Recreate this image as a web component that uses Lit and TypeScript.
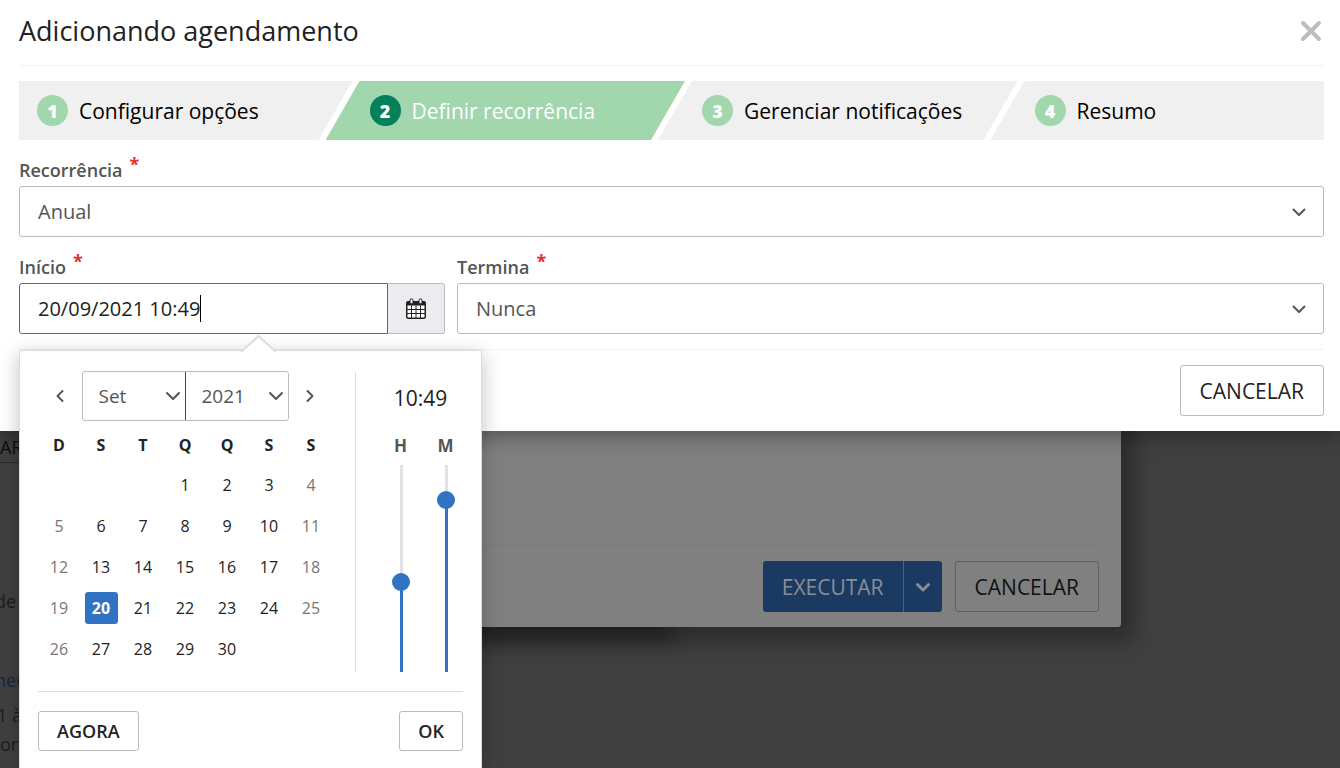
import { LitElement, html, css, svg, nothing } from "lit";
import { customElement, state } from "lit/decorators.js";
import { classMap } from "lit/directives/class-map.js";
import { styleMap } from "lit/directives/style-map.js";

const STEPS = ["Configurar opções", "Definir recorrência", "Gerenciar notificações", "Resumo"];
const MONTHS = ["Jan", "Fev", "Mar", "Abr", "Mai", "Jun", "Jul", "Ago", "Set", "Out", "Nov", "Dez"];
const WEEKDAYS = ["D", "S", "T", "Q", "Q", "S", "S"];

const chevron = (path: string, cls: string) => html`
  <svg class=${cls} width="16" height="16" viewBox="0 0 16 16" fill="none" stroke="currentColor"
    stroke-width="2" stroke-linecap="round" stroke-linejoin="round" aria-hidden="true">
    ${svg`<path d=${path} />`}
  </svg>`;

const DOWN = "M2 5l6 6 6-6";
const SMALL_DOWN = "M2.500 5.500 8 11l5.500-5.500";
const LEFT = "M10.500 3 5.500 8l5 5";
const RIGHT = "M5.500 3l5 5-5 5";

const base = css`
  * {
    box-sizing: border-box;
  }
  button,
  input,
  select {
    margin: 0;
    font: inherit;
    color: inherit;
  }
  button {
    padding: 0;
    border: 0;
    background: none;
    cursor: pointer;
  }
  .btn {
    height: 51px;
    padding: 0 19px;
    border: 1px solid #bcbcbc;
    border-radius: 3px;
    background: #fff;
    color: #222;
    font-size: 21px;
  }
`;

/* Page and earlier dialog, dimmed behind the active dialog. */
@customElement("dimmed-page")
export class DimmedPage extends LitElement {
  static styles = [
    base,
    css`
      :host {
        position: absolute;
        inset: 0;
        overflow: hidden;
        color: #1c1c1c;
        font-size: 18px;
        line-height: 24px;
      }
      .snip {
        position: absolute;
        white-space: nowrap;
        margin: 0;
      }
      .action {
        top: 431px;
        left: 0;
        width: 80px;
        height: 32px;
        border-bottom: 1px solid #2a2a2a;
        color: #0e0e0e;
        line-height: 32px;
      }
      .line1 {
        top: 589px;
        left: -5px;
      }
      .line2 {
        top: 668px;
        left: -5px;
        color: #12273f;
      }
      .line3 {
        top: 703px;
        left: -3px;
      }
      .line4 {
        top: 732px;
        left: 0;
      }
      .panel {
        position: absolute;
        top: 0;
        bottom: 141px;
        left: 219px;
        border-radius: 3px;
        box-shadow: 10px 12px 20px 4px rgba(0, 0, 0, 0.3);
      }
      .under {
        right: 680px;
      }
      .dialog {
        right: 219px;
        display: flex;
        flex-direction: column;
        justify-content: flex-end;
        padding: 0 22px 15px;
        background: #808080;
      }
      .footer {
        display: flex;
        justify-content: flex-end;
        gap: 13px;
        padding-top: 15px;
        border-top: 1px solid #7a7a7a;
      }
      .split {
        display: flex;
      }
      .btn {
        border-color: #606060;
        background: none;
        color: #111;
      }
      .split .btn {
        border: 0;
        background: #1a3a62;
        color: #8a8d92;
      }
      .split .run {
        border-radius: 3px 0 0 3px;
      }
      .split .more {
        display: grid;
        place-items: center;
        width: 39px;
        padding: 0;
        border-left: 1px solid #4a617f;
        border-radius: 0 3px 3px 0;
      }
      .more svg {
        stroke-width: 3;
      }
    `,
  ];

  render() {
    return html`
      <p class="snip action">AR</p>
      <p class="snip line1">de a</p>
      <p class="snip line2">nec</p>
      <p class="snip line3">1 à</p>
      <p class="snip line4">or</p>
      <div class="panel under"></div>
      <div class="panel dialog">
        <div class="footer">
          <div class="split">
            <button class="btn run" type="button">EXECUTAR</button>
            <button class="btn more" type="button" aria-label="Mais">${chevron(SMALL_DOWN, "")}</button>
          </div>
          <button class="btn" type="button">CANCELAR</button>
        </div>
      </div>
    `;
  }
}

@customElement("date-picker")
export class DatePicker extends LitElement {
  @state() private day = 20;
  @state() private month = 8;
  @state() private year = 2021;
  @state() private hour = 10;
  @state() private minute = 49;

  static styles = [
    base,
    css`
      :host {
        display: block;
        padding: 20px 18px 18px;
        border: 1px solid #dcdde1;
        border-radius: 3px;
        background: #fff;
        box-shadow: 0 5px 20px rgba(0, 0, 0, 0.25);
        color: #222;
      }
      .arrow {
        position: absolute;
        top: -16px;
        left: 221px;
        display: block;
      }
      .body {
        display: flex;
        align-items: stretch;
      }
      .calendar {
        width: 294px;
        margin-right: 23px;
      }
      .nav {
        display: flex;
        align-items: center;
        justify-content: space-between;
        padding: 0 14px;
        color: #555;
      }
      .nav button {
        display: grid;
        place-items: center;
        width: 16px;
        height: 32px;
      }
      .selects {
        display: flex;
        height: 50px;
        border: 1px solid #bcbcbc;
        border-radius: 3px;
      }
      .pick {
        position: relative;
        display: flex;
      }
      .pick + .pick {
        border-left: 1px solid #444;
      }
      .pick select {
        width: 102px;
        padding: 0 20px 0 16px;
        border: 0;
        background: none;
        appearance: none;
        font-size: 19px;
      }
      .pick svg {
        position: absolute;
        top: 16px;
        right: 4px;
        pointer-events: none;
      }
      table {
        width: 100%;
        border-collapse: collapse;
        table-layout: fixed;
        font-size: 16px;
      }
      th {
        height: 43px;
        padding: 5px 0 0;
        font-size: 16px;
        font-weight: 700;
      }
      td {
        height: 41px;
        padding: 0;
        text-align: center;
      }
      .day {
        width: 33px;
        height: 32px;
        border-radius: 3px;
      }
      .weekend {
        color: #777;
      }
      .chosen {
        background: #3173c2;
        color: #fff;
        font-weight: 700;
      }
      .time {
        flex: 1;
        margin-top: 1px;
        padding-left: 22px;
        border-left: 1px solid #dcdde1;
      }
      .clock {
        display: block;
        padding-top: 12px;
        font-size: 21px;
        line-height: 28px;
        text-align: center;
      }
      .sliders {
        display: flex;
        gap: 26px;
        padding-left: 13px;
      }
      .slider {
        display: flex;
        flex-direction: column;
        align-items: center;
        width: 19px;
        padding-top: 22px;
        color: #555;
        font-size: 17px;
        font-weight: 700;
        line-height: 24px;
      }
      .slider input {
        width: 18px;
        height: 225px;
        margin: -2px 0 -9px;
        appearance: none;
        writing-mode: vertical-lr;
        direction: rtl;
        background: linear-gradient(to top, #3173c2 var(--fill), #e1e2e6 0) 8px 9px / 3px 207px no-repeat;
      }
      .slider input::-webkit-slider-runnable-track {
        width: 18px;
        background: none;
      }
      .slider input::-webkit-slider-thumb {
        appearance: none;
        width: 18px;
        height: 18px;
        border-radius: 50%;
        background: #3173c2;
      }
      .footer {
        display: flex;
        justify-content: space-between;
        margin-top: 19px;
        padding-top: 19px;
        border-top: 1px solid #dcdde1;
      }
      .btn {
        height: 40px;
        padding: 0 18px;
        font-size: 18px;
        font-weight: 600;
      }
    `,
  ];

  private weeks(): number[][] {
    // Leading zeros stand for the blank cells before the first day.
    const offset = new Date(this.year, this.month, 1).getDay();
    const count = new Date(this.year, this.month + 1, 0).getDate();
    const cells = [...Array(offset).fill(0), ...Array.from({ length: count }, (_, i) => i + 1)];
    while (cells.length % 7) cells.push(0);
    return Array.from({ length: cells.length / 7 }, (_, i) => cells.slice(i * 7, i * 7 + 7));
  }

  private move(step: number) {
    const next = new Date(this.year, this.month + step, 1);
    this.year = next.getFullYear();
    this.month = next.getMonth();
  }

  render() {
    return html`
      <svg class="arrow" width="35" height="18" viewBox="0 0 35 18" aria-hidden="true">
        <path d="M0 17.500 17.500 0 35 17.500V18H0z" fill="#fff" />
        <path d="M0 17 17.500 1 35 17" fill="none" stroke="#dcdde1" stroke-width="2" />
      </svg>
      <div class="body">
        <div class="calendar">
          <div class="nav">
            <button type="button" aria-label="Mês anterior" @click=${() => this.move(-1)}>${chevron(LEFT, "")}</button>
            <div class="selects">
              <div class="pick">
                <select aria-label="Mês" @change=${(e: Event) => (this.month = +(e.target as HTMLSelectElement).value)}>
                  ${MONTHS.map((m, i) => html`<option value=${i} ?selected=${i === this.month}>${m}</option>`)}
                </select>
                ${chevron(DOWN, "")}
              </div>
              <div class="pick">
                <select aria-label="Ano" @change=${(e: Event) => (this.year = +(e.target as HTMLSelectElement).value)}>
                  ${[2020, 2021, 2022].map((y) => html`<option value=${y} ?selected=${y === this.year}>${y}</option>`)}
                </select>
                ${chevron(DOWN, "")}
              </div>
            </div>
            <button type="button" aria-label="Próximo mês" @click=${() => this.move(1)}>${chevron(RIGHT, "")}</button>
          </div>
          <table>
            <thead>
              <tr>${WEEKDAYS.map((d) => html`<th scope="col">${d}</th>`)}</tr>
            </thead>
            <tbody>
              ${this.weeks().map(
                (week) => html`<tr>
                  ${week.map((d, i) => {
                    const classes = {
                      day: true,
                      weekend: i === 6 || i === 0,
                      chosen: d === this.day,
                    };
                    return html`<td>
                      ${d
                        ? html`<button type="button" class=${classMap(classes)} @click=${() => (this.day = d)}>${d}</button>`
                        : nothing}
                    </td>`;
                  })}
                </tr>`
              )}
            </tbody>
          </table>
        </div>
        <div class="time">
          <output class="clock">${this.hour}:${String(this.minute).padStart(2, "0")}</output>
          <div class="sliders">
            <label class="slider">H
              <input type="range" min="0" max="23" .value=${String(this.hour)}
                style=${styleMap({ "--fill": `${(this.hour / 23) * 100}%` })}
                @input=${(e: Event) => (this.hour = +(e.target as HTMLInputElement).value)} />
            </label>
            <label class="slider">M
              <input type="range" min="0" max="59" .value=${String(this.minute)}
                style=${styleMap({ "--fill": `${(this.minute / 59) * 100}%` })}
                @input=${(e: Event) => (this.minute = +(e.target as HTMLInputElement).value)} />
            </label>
          </div>
        </div>
      </div>
      <div class="footer">
        <button class="btn" type="button">AGORA</button>
        <button class="btn" type="button">OK</button>
      </div>
    `;
  }
}

@customElement("app-root")
export class AppRoot extends LitElement {
  static styles = [
    base,
    css`
      :host {
        position: relative;
        display: block;
        height: 100vh;
        overflow: hidden;
        background: #404040;
        color: #222;
        font-family: "Open Sans", "Noto Sans", sans-serif;
      }
      .dialog {
        position: relative;
        padding: 0 16px 15px 19px;
        background: #fff;
        box-shadow: 0 5px 20px rgba(0, 0, 0, 0.35);
      }
      .header {
        display: flex;
        align-items: center;
        justify-content: space-between;
        height: 66px;
        padding-bottom: 4px;
        border-bottom: 1px solid #f2f2f2;
      }
      h1 {
        margin: 0;
        font-size: 27px;
        font-weight: 400;
        line-height: 36px;
      }
      .close {
        display: block;
        padding-right: 2px;
        color: #bdbdbd;
      }
      .close svg {
        display: block;
      }
      .steps {
        display: flex;
        margin: 15px 0 0;
        padding: 0;
        list-style: none;
        color: #000;
        font-size: 21px;
      }
      .step {
        box-sizing: content-box;
        flex: 1 1 0;
        display: flex;
        align-items: center;
        gap: 11px;
        height: 59px;
        padding: 0 34px 0 44px;
        background: #f0f0f0;
        clip-path: polygon(34px 0, 100% 0, calc(100% - 34px) 100%, 0 100%);
        white-space: nowrap;
      }
      .step + .step {
        margin-left: -27px;
      }
      .step:first-child {
        padding-left: 18px;
        clip-path: polygon(0 0, 100% 0, calc(100% - 34px) 100%, 0 100%);
      }
      .step:last-child {
        padding-right: 8px;
        clip-path: polygon(34px 0, 100% 0, 100% 100%, 0 100%);
      }
      .num {
        width: 31px;
        height: 31px;
        border-radius: 50%;
        background: #a2d6ad;
        color: #fff;
        font-size: 18px;
        font-weight: 800;
        line-height: 32px;
        text-align: center;
      }
      .current {
        background: #a2d6ad;
        color: #fff;
      }
      .current .num {
        background: #05805a;
      }
      .row {
        display: flex;
        gap: 12px;
      }
      .start {
        position: relative;
        flex: 0 0 calc(33.333% - 9px);
      }
      .end {
        flex: 1;
      }
      .label {
        display: flex;
        gap: 7px;
        height: 46px;
        padding-top: 18px;
        color: #555;
        font-size: 18px;
        font-weight: 600;
        line-height: 24px;
      }
      .req {
        color: #d9342b;
        font-weight: 700;
        line-height: 12px;
      }
      .control {
        position: relative;
        display: flex;
        height: 51px;
        font-size: 20px;
      }
      .control select,
      .control input {
        flex: 1;
        min-width: 0;
        padding: 0 18px;
        border: 1px solid #bcbcbc;
        border-radius: 3px;
        background: #fff;
        appearance: none;
        outline: 0;
      }
      .control select {
        color: #555;
      }
      .control input {
        border-color: #3173c2;
        border-radius: 3px 0 0 3px;
        caret-color: transparent;
      }
      .caret {
        position: absolute;
        top: 12px;
        left: 181px;
        width: 1px;
        height: 27px;
        background: #000;
      }
      .down {
        position: absolute;
        top: 18px;
        right: 17px;
        color: #555;
        pointer-events: none;
      }
      .open {
        display: grid;
        place-items: center;
        width: 57px;
        border: 1px solid #bcbcbc;
        border-left: 0;
        border-radius: 0 3px 3px 0;
        background: #ebecf0;
      }
      .footer {
        display: flex;
        justify-content: flex-end;
        margin-top: 15px;
        padding-top: 15px;
        border-top: 1px solid #f2f2f2;
      }
      date-picker {
        position: absolute;
        top: calc(100% + 16px);
        left: 0;
        width: 463px;
        z-index: 1;
      }
    `,
  ];

  render() {
    return html`
      <dimmed-page></dimmed-page>
      <main class="dialog">
        <header class="header">
          <h1>Adicionando agendamento</h1>
          <button class="close" type="button" aria-label="Fechar">
            <svg width="22" height="22" viewBox="0 0 22 22" stroke="currentColor" stroke-width="4" stroke-linecap="round">
              <path d="M3 3l16 16M19 3 3 19" />
            </svg>
          </button>
        </header>
        <ol class="steps">
          ${STEPS.map(
            (name, i) => html`<li class=${classMap({ step: true, current: i === 1 })}>
              <span class="num">${i + 1}</span><span>${name}</span>
            </li>`
          )}
        </ol>
        <div>
          <label class="label" for="recurrence">Recorrência <span class="req">*</span></label>
          <div class="control">
            <select id="recurrence">
              <option>Anual</option>
            </select>
            ${chevron(SMALL_DOWN, "down")}
          </div>
        </div>
        <div class="row">
          <div class="start">
            <label class="label" for="start">Início <span class="req">*</span></label>
            <div class="control">
              <input id="start" type="text" value="20/09/2021 10:49" autocomplete="off" />
              <span class="caret"></span>
              <button class="open" type="button" aria-label="Abrir calendário">
                <svg width="20" height="22" viewBox="0 0 20 22" aria-hidden="true">
                  <rect x="0.750" y="3.750" width="18.500" height="16.500" rx="1.500" fill="#fff" stroke="#222" stroke-width="1.500" />
                  <path d="M1 3.500h18v4H1z" fill="#222" />
                  <path d="M5.500 7.500v12.500M10 7.500v12.500M14.500 7.500v12.500M1 11.500h18M1 15.500h18" stroke="#222" stroke-width="1" />
                  <rect x="4" y="0.750" width="3" height="5" rx="1.500" fill="#fff" stroke="#222" />
                  <rect x="13" y="0.750" width="3" height="5" rx="1.500" fill="#fff" stroke="#222" />
                </svg>
              </button>
            </div>
            <date-picker></date-picker>
          </div>
          <div class="end">
            <label class="label" for="end">Termina <span class="req">*</span></label>
            <div class="control">
              <select id="end">
                <option>Nunca</option>
              </select>
              ${chevron(SMALL_DOWN, "down")}
            </div>
          </div>
        </div>
        <footer class="footer">
          <button class="btn" type="button">CANCELAR</button>
        </footer>
      </main>
    `;
  }
}
